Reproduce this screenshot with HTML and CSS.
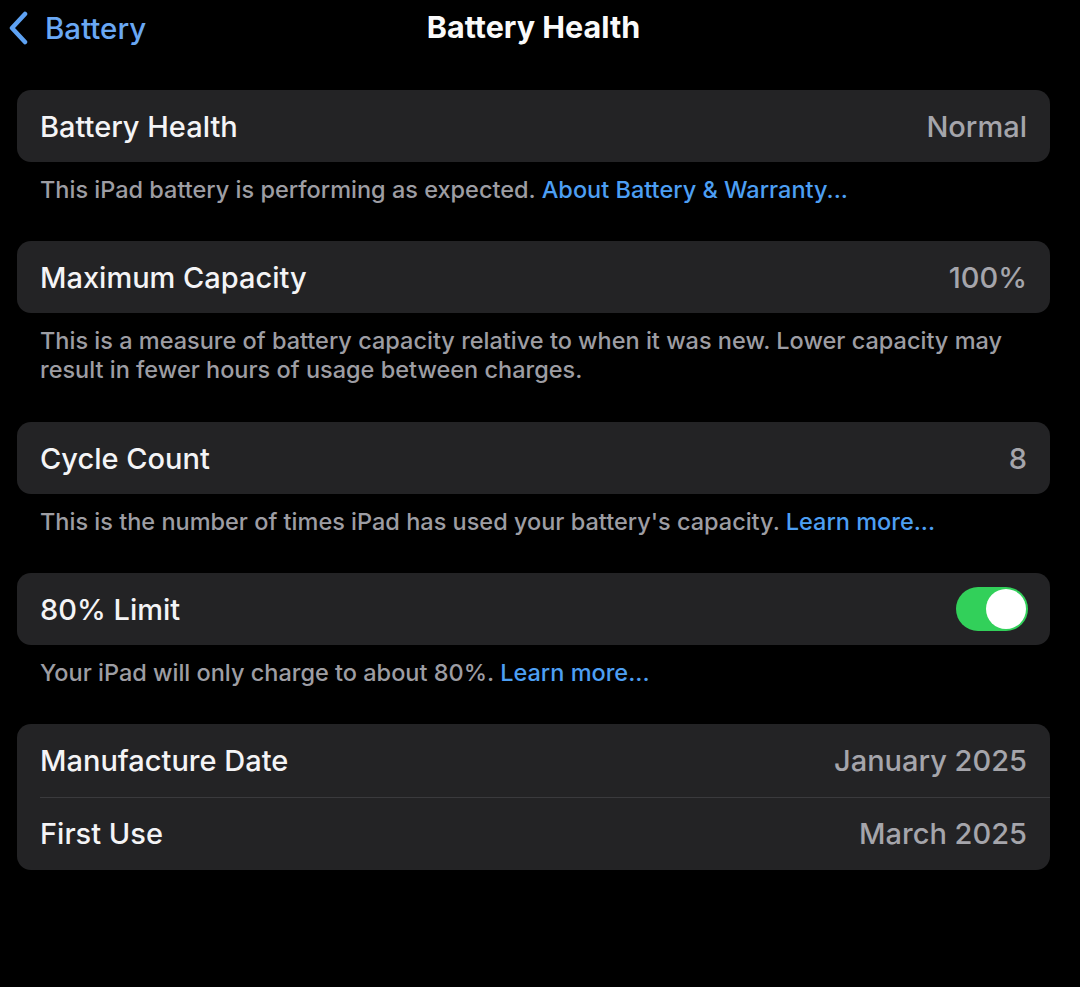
FILE: index.html
```html
<!DOCTYPE html>
<html>
<head>
<meta charset="utf-8">
<link rel="stylesheet" href="styles.css">
</head>
<body>
<div class="page">
  <header class="nav">
    <div class="back">
      <svg class="chev" width="22" height="34" viewBox="0 0 22 34"><path d="M17 3 L4 17 L17 31" fill="none" stroke="#5ea2f3" stroke-width="4.5" stroke-linecap="round" stroke-linejoin="round"/></svg>
      <span class="back-label">Battery</span>
    </div>
    <h1 class="title">Battery Health</h1>
  </header>

  <section class="group">
    <div class="card">
      <div class="row"><span class="label">Battery Health</span><span class="value">Normal</span></div>
    </div>
    <p class="footer">This iPad battery is performing as expected. <span class="link">About Battery &amp; Warranty...</span></p>
  </section>

  <section class="group">
    <div class="card">
      <div class="row"><span class="label">Maximum Capacity</span><span class="value">100%</span></div>
    </div>
    <p class="footer two">This is a measure of battery capacity relative to when it was new. Lower capacity may result in fewer hours of usage between charges.</p>
  </section>

  <section class="group">
    <div class="card">
      <div class="row"><span class="label">Cycle Count</span><span class="value">8</span></div>
    </div>
    <p class="footer">This is the number of times iPad has used your battery's capacity. <span class="link">Learn more...</span></p>
  </section>

  <section class="group">
    <div class="card">
      <div class="row"><span class="label">80% Limit</span><span class="toggle"><span class="knob"></span></span></div>
    </div>
    <p class="footer">Your iPad will only charge to about 80%. <span class="link">Learn more...</span></p>
  </section>

  <section class="group">
    <div class="card">
      <div class="row tall"><span class="label">Manufacture Date</span><span class="value">January 2025</span></div>
      <div class="row tall sep"><span class="label">First Use</span><span class="value">March 2025</span></div>
    </div>
  </section>
</div>
</body>
</html>
```
FILE: styles.css
```css
* { box-sizing: border-box; }
html, body { margin: 0; padding: 0; background: #000; }
body {
  width: 1080px;
  height: 987px;
  overflow: hidden;
  font-family: Inter, "Noto Sans", sans-serif;
  color: #f2f2f4;
}
.page { padding: 0 30px 0 17px; }
.nav {
  position: relative;
  height: 90px;
  display: flex;
  align-items: flex-start;
}
.back {
  display: flex;
  align-items: center;
  gap: 15px;
  margin-left: -9px;
  padding-top: 10px;
}
.chev { display: block; }
.back-label {
  color: #6aa8f4;
  font-size: 29.5px;
  font-weight: 500;
}
.title {
  position: absolute;
  left: 0;
  right: 0;
  top: 8px;
  margin: 0;
  text-align: center;
  font-size: 30.5px;
  font-weight: 700;
  color: #fafafa;
}
.card {
  background: #232325;
  border-radius: 14px;
  overflow: hidden;
}
.row {
  height: 72px;
  display: flex;
  align-items: center;
  justify-content: space-between;
  padding: 0 23px;
  position: relative;
}
.row.tall { height: 73px; }
.row.sep::before {
  content: "";
  position: absolute;
  left: 23px;
  right: 0;
  top: 0;
  height: 1px;
  background: #3a3a3d;
}
.label {
  font-size: 29px;
  font-weight: 500;
  color: #f4f4f6;
}
.value {
  font-size: 29px;
  font-weight: 500;
  color: #a5a5ab;
}
.footer {
  margin: 0;
  padding: 13px 23px 37px;
  font-size: 23.5px;
  line-height: 29px;
  font-weight: 500;
  color: #9d9da3;
}
.footer.two { padding-bottom: 38px; }
.link { color: #4d9ff3; }
.toggle {
  width: 72px;
  height: 44px;
  border-radius: 22px;
  background: #32d05a;
  position: relative;
  display: block;
  margin-right: -1px;
}
.knob {
  position: absolute;
  right: 2px;
  top: 2px;
  width: 40px;
  height: 40px;
  border-radius: 50%;
  background: #fff;
}
```
